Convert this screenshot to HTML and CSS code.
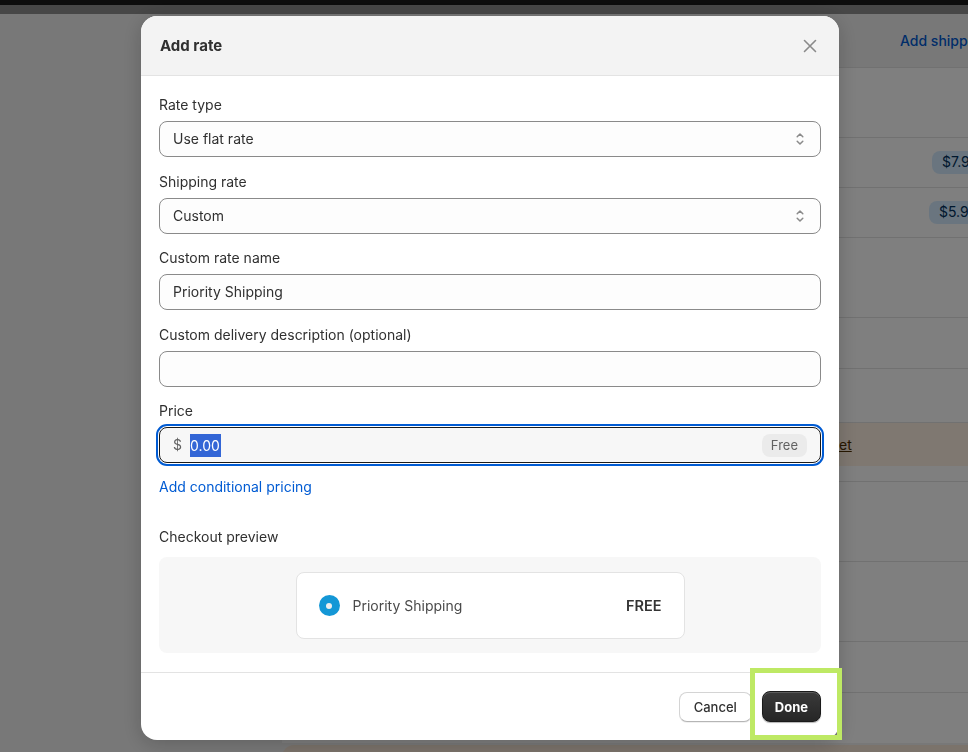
FILE: index.html
```html
<!DOCTYPE html>
<html lang="en">

<head>
    <meta charset="UTF-8">
    <meta name="viewport" content="width=device-width, initial-scale=1.0">
    <title>Add rate</title>
    <link rel="stylesheet" href="styles.css">
</head>

<body>
    <!-- page behind the modal -->
    <div class="app">
        <div class="topbar"></div>
        <div class="subbar"></div>
        <div class="main">
            <div class="nav"></div>
            <div class="content">
                <div class="page-head">
                    <a href="#">Add shipping rate</a>
                </div>
                <div class="list">
                    <div class="row row-head"></div>
                    <div class="row"><span class="badge">$7.99</span></div>
                    <div class="row"><span class="badge badge-wide">$5.99</span></div>
                    <div class="row row-group"></div>
                    <div class="row row-sm"></div>
                    <div class="row row-md"></div>
                    <div class="banner-wrap">
                        <div class="banner"><a href="#">Set</a></div>
                    </div>
                    <div class="row row-group"></div>
                    <div class="row row-group"></div>
                    <div class="row row-sm"></div>
                    <div class="row row-sm"></div>
                </div>
                <div class="notice"></div>
            </div>
        </div>
    </div>

    <!-- modal -->
    <div class="backdrop">
        <div class="modal">
            <div class="modal-header">
                <h2>Add rate</h2>
                <button class="close" aria-label="Close">
                    <svg viewBox="0 0 20 20" width="20" height="20">
                        <path d="M4.5 4.5 15.5 15.5M15.5 4.5 4.5 15.5" stroke="#8a8a8a" stroke-width="1.6" stroke-linecap="round" fill="none"/>
                    </svg>
                </button>
            </div>

            <div class="modal-body">
                <div class="form">
                    <div class="field">
                        <label>Rate type</label>
                        <div class="input select">
                            <span>Use flat rate</span>
                            <svg viewBox="0 0 20 20" width="20" height="20">
                                <path d="M7.2 7.8 10 5l2.8 2.8M7.2 12.2 10 15l2.8-2.8" stroke="#8a8a8a" stroke-width="1.5" stroke-linecap="round" stroke-linejoin="round" fill="none"/>
                            </svg>
                        </div>
                    </div>
                    <div class="field">
                        <label>Shipping rate</label>
                        <div class="input select">
                            <span>Custom</span>
                            <svg viewBox="0 0 20 20" width="20" height="20">
                                <path d="M7.2 7.8 10 5l2.8 2.8M7.2 12.2 10 15l2.8-2.8" stroke="#8a8a8a" stroke-width="1.5" stroke-linecap="round" stroke-linejoin="round" fill="none"/>
                            </svg>
                        </div>
                    </div>
                    <div class="field">
                        <label>Custom rate name</label>
                        <div class="input"><span>Priority Shipping</span></div>
                    </div>
                    <div class="field">
                        <label>Custom delivery description (optional)</label>
                        <div class="input"></div>
                    </div>
                    <div class="field">
                        <label>Price</label>
                        <div class="input price focused">
                            <span class="prefix">$</span>
                            <span class="selected">0.00</span>
                            <span class="chip">Free</span>
                        </div>
                        <a href="#" class="link">Add conditional pricing</a>
                    </div>
                </div>

                <div class="preview">
                    <label>Checkout preview</label>
                    <div class="preview-box">
                        <div class="preview-card">
                            <span class="radio"></span>
                            <span class="preview-name">Priority Shipping</span>
                            <span class="preview-price">FREE</span>
                        </div>
                    </div>
                </div>
            </div>

            <div class="modal-footer">
                <button class="btn">Cancel</button>
                <button class="btn btn-primary">Done</button>
            </div>
        </div>
    </div>

    <div class="highlight"></div>
</body>

</html>
```

FILE: styles.css
```css
* {
    box-sizing: border-box;
}

html,
body {
    margin: 0;
    padding: 0;
}

body {
    width: 968px;
    height: 752px;
    overflow: hidden;
    font-family: Inter, 'Noto Sans', sans-serif;
    font-size: 14px;
    line-height: 20px;
    color: #303030;
    background: #f1f1f1;
}

button {
    font-family: inherit;
}

/* page behind */
.app {
    height: 752px;
    display: flex;
    flex-direction: column;
}

.topbar {
    height: 5px;
    flex-shrink: 0;
    background: #1a1a1a;
}

.subbar {
    height: 9px;
    flex-shrink: 0;
    background: #8e8e8e;
}

.main {
    display: flex;
    flex: 1;
}

.nav {
    width: 282px;
    flex-shrink: 0;
}

.content {
    width: 760px;
    flex-shrink: 0;
}

.page-head {
    height: 53px;
    display: flex;
    align-items: center;
    padding-left: 618px;
}

.page-head a {
    color: #005bd3;
    font-weight: 500;
    text-decoration: none;
    white-space: nowrap;
}

.list {
    background: #fff;
}

.row {
    height: 50px;
    border-top: 1px solid #e3e3e3;
    display: flex;
    align-items: center;
    padding-left: 650px;
}

.row-head {
    height: 70px;
}

.row-group {
    height: 80px;
}

.row-sm {
    height: 51px;
}

.row-md {
    height: 54px;
}

.badge {
    background: #d5ebff;
    color: #00315c;
    border-radius: 8px;
    padding: 1px 10px 2px;
    white-space: nowrap;
}

.badge-wide {
    margin-left: -3px;
}

.banner-wrap {
    border-top: 1px solid #e3e3e3;
    padding-bottom: 15px;
}

.banner {
    height: 43px;
    background: #fff1e3;
    display: flex;
    align-items: center;
    padding-left: 548px;
}

.banner a {
    color: #4f2f00;
    white-space: nowrap;
}

.notice {
    height: 20px;
    margin-top: 2px;
    background: #f7e6d6;
    border-radius: 12px 0 0 0;
}

/* modal */
.backdrop {
    position: fixed;
    inset: 0;
    background: rgba(0, 0, 0, 0.5);
    padding: 16px 0 0 141px;
}

.modal {
    width: 698px;
    background: #fff;
    border-radius: 16px;
    overflow: hidden;
    box-shadow: 0 4px 20px rgba(0, 0, 0, 0.2);
}

.modal-header {
    height: 60px;
    background: #f3f3f3;
    border-bottom: 1px solid #e3e3e3;
    display: flex;
    align-items: center;
    justify-content: space-between;
    padding: 0 19px;
}

.modal-header h2 {
    margin: 0;
    font-size: 15px;
    font-weight: 650;
    color: #303030;
}

.close {
    background: none;
    border: none;
    padding: 0;
    width: 20px;
    height: 20px;
    display: flex;
}

.modal-body {
    padding: 19px 18px;
}

.form {
    display: flex;
    flex-direction: column;
    gap: 14.5px;
}

.field label,
.preview label {
    display: block;
    margin-bottom: 6px;
}

.input {
    height: 36px;
    border: 1px solid #8a8a8a;
    border-radius: 8px;
    background: #fdfdfd;
    display: flex;
    align-items: center;
    padding: 0 12px 0 13px;
}

.select {
    justify-content: space-between;
    padding-right: 10px;
}

.price.focused {
    background: #f7f7f7;
    border-color: #1a1a1a;
    outline: 2px solid #005bd3;
    outline-offset: 1px;
    padding-right: 13px;
}

.prefix {
    color: #616161;
    margin-right: 8px;
}

.selected {
    background: #3366d6;
    color: #fff;
    line-height: 23px;
    padding-right: 1px;
}

.chip {
    margin-left: auto;
    background: #ebebeb;
    color: #616161;
    font-size: 13px;
    border-radius: 8px;
    padding: 1px 9px 2px;
}

.link {
    display: block;
    margin-top: 14px;
    color: #005bd3;
    text-decoration: none;
}

.preview {
    margin-top: 30px;
}

.preview label {
    margin-bottom: 10px;
}

.preview-box {
    background: #f7f7f7;
    border-radius: 8px;
    padding: 15px 0 14px;
    display: flex;
    justify-content: center;
}

.preview-card {
    width: 389px;
    height: 67px;
    background: #fff;
    border: 1px solid #e3e3e3;
    border-radius: 8px;
    display: flex;
    align-items: center;
    padding: 0 22px;
}

.radio {
    width: 21px;
    height: 21px;
    border-radius: 50%;
    background: #1497d6;
    display: flex;
    align-items: center;
    justify-content: center;
}

.radio::after {
    content: '';
    width: 6px;
    height: 6px;
    border-radius: 50%;
    background: #eeeeee;
}

.preview-name {
    margin-left: 13px;
    color: #4a4a4a;
}

.preview-price {
    margin-left: auto;
    font-weight: 600;
    font-size: 14.5px;
    color: #333;
}

.modal-footer {
    border-top: 1px solid #e3e3e3;
    height: 68px;
    display: flex;
    align-items: center;
    justify-content: flex-end;
    gap: 10px;
    padding: 0 18px 0 0;
}

.btn {
    height: 30px;
    padding: 0 14px;
    border-radius: 8px;
    border: 1px solid #d4d4d4;
    border-bottom-color: #b5b5b5;
    background: #fff;
    color: #303030;
    font-size: 13px;
    font-weight: 550;
    box-shadow: 0 1px 0 rgba(0, 0, 0, 0.06);
}

.btn-primary {
    height: 31px;
    padding: 0 12px;
    background: linear-gradient(#3a3a3a, #262626);
    border: 1px solid #1a1a1a;
    color: #fff;
    font-weight: 650;
    box-shadow: inset 0 1px 0 rgba(255, 255, 255, 0.18), 0 1px 1px rgba(0, 0, 0, 0.3);
}

/* annotation box */
.highlight {
    position: fixed;
    left: 750px;
    top: 668px;
    width: 92px;
    height: 72px;
    border: 5px solid #bee964;
}
```
